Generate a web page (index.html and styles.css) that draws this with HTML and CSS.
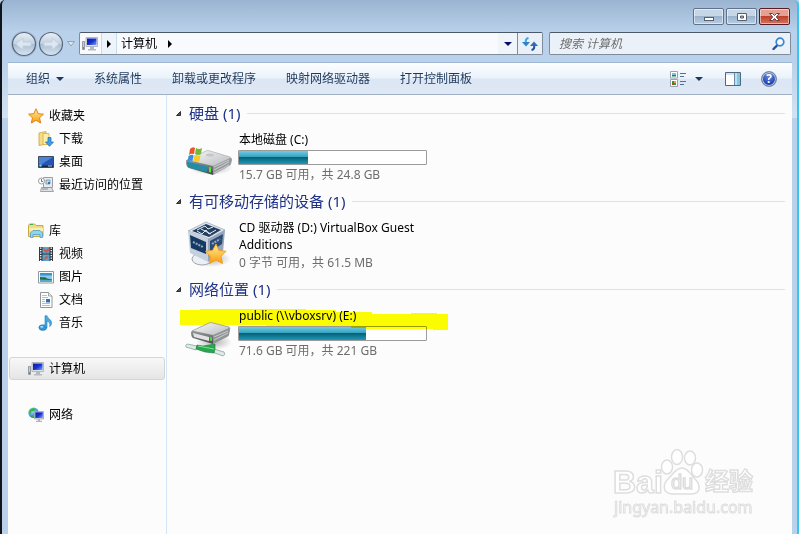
FILE: index.html
```html
<!DOCTYPE html>
<html lang="zh-CN">

<head>
    <meta charset="UTF-8">
    <meta name="viewport" content="width=device-width, initial-scale=1.0">
    <title>计算机</title>
    <link rel="stylesheet" href="styles.css">
</head>

<body>
    <!-- 公用图标 -->
    <svg class="defs" width="0" height="0" aria-hidden="true">
        <defs>
            <linearGradient id="screen" x1="0" y1="0" x2="1" y2="1">
                <stop offset="0" stop-color="#0a18b8"/>
                <stop offset=".5" stop-color="#1830d0"/>
                <stop offset="1" stop-color="#7da2f5"/>
            </linearGradient>
            <linearGradient id="gold" x1="0" y1="0" x2="0" y2="1">
                <stop offset="0" stop-color="#fff09a"/>
                <stop offset="1" stop-color="#f79a0c"/>
            </linearGradient>
            <linearGradient id="metal" x1="0" y1="0" x2="1" y2="1">
                <stop offset="0" stop-color="#fafafa"/>
                <stop offset="1" stop-color="#b4b6b8"/>
            </linearGradient>
            <linearGradient id="dark" x1="0" y1="0" x2="0" y2="1">
                <stop offset="0" stop-color="#9a9da0"/>
                <stop offset="1" stop-color="#46494c"/>
            </linearGradient>
            <linearGradient id="disc" x1="0" y1="0" x2="0" y2="1">
                <stop offset="0" stop-color="#e9f0f7"/>
                <stop offset=".48" stop-color="#c3d1e0"/>
                <stop offset=".5" stop-color="#a9bdd2"/>
                <stop offset="1" stop-color="#d8e6f3"/>
            </linearGradient>
            <radialGradient id="globe" cx=".35" cy=".3" r=".8">
                <stop offset="0" stop-color="#9fe8ff"/>
                <stop offset="1" stop-color="#1363b8"/>
            </radialGradient>
            <radialGradient id="shade">
                <stop offset="0" stop-color="#000" stop-opacity=".3"/>
                <stop offset="1" stop-color="#000" stop-opacity="0"/>
            </radialGradient>
            <symbol id="computer" viewBox="0 0 16 16">
                <path d="M.5 5.5h2v8h-2z" fill="#c9cdd0" stroke="#858b90" stroke-width=".8"/>
                <path d="M1 11h1v2H1z" fill="#34b64a"/>
                <path d="M4 1.5h11.5v9H4z" fill="#dfe3e6" stroke="#a5abb0" stroke-width=".8"/>
                <path d="M5 2.5h9.5V9H5z" fill="url(#screen)"/>
                <path d="M8 11h4v2h2v1.5H6V13h2z" fill="#b5babe"/>
            </symbol>
            <symbol id="drop" viewBox="0 0 8 4">
                <path d="M0 0h8L4 4z" fill="currentColor"/>
            </symbol>
            <symbol id="right" viewBox="0 0 4 8">
                <path d="M0 0v8l4-4z"/>
            </symbol>
            <symbol id="open" viewBox="0 0 7 7">
                <path d="M5.500 1.500v4h-4z" fill="#555" stroke="#222" stroke-width=".9"/>
            </symbol>
        </defs>
    </svg>

    <div class="window">
        <header>
            <div class="titlebar">
                <button type="button" class="win-btn" aria-label="最小化">
                    <svg width="12" height="10"><rect x="1.500" y="5.500" width="9" height="3" fill="#fff" stroke="#58606c"/></svg>
                </button>
                <button type="button" class="win-btn" aria-label="最大化">
                    <svg width="12" height="10"><path d="M1.500 1.500h9v7h-9zM4.500 4h3v2h-3z" fill="#fff" fill-rule="evenodd" stroke="#58606c"/></svg>
                </button>
                <button type="button" class="win-btn close" aria-label="关闭">
                    <svg width="13" height="10"><path d="M1.500 1.500h3l2 2 2-2h3L8.300 5l3.200 3.500h-3l-2-2-2 2h-3L4.700 5z" fill="#fff" stroke="#654046"/></svg>
                </button>
            </div>

            <div class="navbar">
                <div class="history">
                    <button type="button" aria-label="后退">
                        <svg width="26" height="26"><circle cx="13" cy="13" r="11.500" fill="url(#disc)" stroke="#59687a" stroke-width="1.200"/><path d="M5 13l7-6v4h8v4h-8v4z" fill="#dce7f2" stroke="#c3d0de"/></svg>
                    </button>
                    <button type="button" aria-label="前进">
                        <svg width="26" height="26"><circle cx="13" cy="13" r="11.500" fill="url(#disc)" stroke="#59687a" stroke-width="1.200"/><path d="M21 13l-7-6v4H6v4h8v4z" fill="#dce7f2" stroke="#c3d0de"/></svg>
                    </button>
                    <button type="button" class="recent" aria-label="最近位置">
                        <svg width="8" height="6"><path d="M.5.500h7L4 5z" fill="#dbe6f2" stroke="#8fa3b9"/></svg>
                    </button>
                </div>
                <div class="address">
                    <svg class="pc" width="16" height="16"><use href="#computer"/></svg>
                    <span class="crumb-arrow"><svg width="4" height="8"><use href="#right"/></svg></span>
                    <a class="crumb" href="#">计算机</a>
                    <svg width="4" height="8"><use href="#right"/></svg>
                    <button type="button" class="addr-drop" aria-label="以前的位置"><svg width="8" height="4"><use href="#drop"/></svg></button>
                    <button type="button" class="refresh" aria-label="刷新">
                        <svg width="16" height="14"><path d="M6.500 1C3.500 1.500 3.500 4 4 6" fill="none" stroke="#45a2dc" stroke-width="2"/><path d="M0 5h8L4 9.500z" fill="#2f7fca"/><path d="M9.500 13c3-.5 3-3 2.500-5" fill="none" stroke="#214f9c" stroke-width="2"/><path d="M8 9h8l-4-4.500z" fill="#2f6bb8"/></svg>
                    </button>
                </div>
                <div class="search">
                    <input type="text" aria-label="搜索" placeholder="搜索 计算机">
                    <svg width="13" height="13"><path d="M6 7.500L1.500 12" stroke="#27509c" stroke-width="2.400" stroke-linecap="round"/><circle cx="8" cy="5" r="3.800" fill="#f3f9fe" stroke="#3a86cc" stroke-width="1.700"/></svg>
                </div>
            </div>
        </header>

        <nav class="toolbar">
            <button type="button">组织<svg width="8" height="4"><use href="#drop"/></svg></button>
            <button type="button">系统属性</button>
            <button type="button">卸载或更改程序</button>
            <button type="button">映射网络驱动器</button>
            <button type="button">打开控制面板</button>
            <div class="tools">
                <button type="button" aria-label="更改视图">
                    <svg width="17" height="16"><path d="M.5.500h7v6.500h-7zM.5 8.500h7v7h-7z" fill="#fff" stroke="#9aa3ad"/><path d="M2 2h4v2H2z" fill="#72c4e8"/><path d="M2 4h4v1.500H2z" fill="#2b7b50"/><path d="M2 10h2v2H2zM4 12h2v2H4z" fill="#2e9b3c"/><path d="M4 10h2v2H4z" fill="#e3a520"/><path d="M2 12h2v2H2z" fill="#c73530"/><path d="M10 2.500h6M10 5.500h4M10 10.500h6M10 13.500h4" stroke="#54708f"/></svg>
                    <svg width="8" height="4"><use href="#drop"/></svg>
                </button>
                <button type="button" aria-label="显示预览窗格">
                    <svg width="16" height="14"><path d="M.5.500h15v13H.5z" fill="#fff" stroke="#4f6781"/><path d="M1 1h9v2H1z" fill="#d6e1ec"/><path d="M10 1h5v12h-5z" fill="#81c9e2"/><path d="M10 1h2v12h-2z" fill="#b4e3f2"/><path d="M9.500 1v12" stroke="#6f8ba6"/></svg>
                </button>
                <button type="button" class="help" aria-label="帮助">?</button>
            </div>
        </nav>

        <div class="content">
            <aside class="sidebar">
                <ul>
                    <li><a href="#"><svg width="16" height="16"><path d="M8 .8l2.200 4.900 5.200.5-3.900 3.600 1.200 5.200L8 12.300 3.300 15l1.200-5.200L.6 6.200l5.200-.5z" fill="url(#gold)" stroke="#e08318"/></svg>收藏夹</a></li>
                    <li class="sub"><a href="#"><svg width="16" height="16"><path d="M1 2l7-1.500V13L1 14.500z" fill="#f6dd83" stroke="#c9a53d" stroke-width=".8"/><path d="M5 2.500h6v11H5z" fill="#fbedaa" stroke="#d5b04b" stroke-width=".8"/><path d="M10 6.500h3V11h2.500l-4 4.300-4-4.300H10z" fill="#3da0e8" stroke="#1c66b0" stroke-width=".7"/></svg>下载</a></li>
                    <li class="sub"><a href="#"><svg width="16" height="16"><path d="M.5 2.500h15v11H.5z" fill="#2555b0" stroke="#3b4a60"/><path d="M1 3h14L4 10H1z" fill="#4d83d6"/><path d="M1 11.500h14V13H1z" fill="#1c2740"/><circle cx="2.500" cy="11.500" r="1.300" fill="#59d4ee"/><path d="M10 12h4" stroke="#a3bedd"/></svg>桌面</a></li>
                    <li class="sub"><a href="#"><svg width="16" height="16"><path d="M5.500.500h9v10h-9z" fill="#e8ebee" stroke="#999fa5"/><path d="M8 3h4v4H8z" fill="#a8e0f5" stroke="#7d8890" stroke-width=".7"/><path d="M10 5h2v2h-2z" fill="#2876b9"/><path d="M3.500 10.500h10l2 4h-13z" fill="#dde1e4" stroke="#8b9197" stroke-width=".8"/><path d="M4 12h6" stroke="#888e94"/><circle cx="3.500" cy="4" r="3" fill="#fff" stroke="#9b9fa3"/><path d="M3.500 2v2.500H5" fill="none" stroke="#555" stroke-width=".8"/></svg>最近访问的位置</a></li>
                </ul>
                <ul>
                    <li><a href="#"><svg width="16" height="16"><path d="M.5 2.500l1-1.500h5l1.500 1.500h7v11H.5z" fill="#f3db80" stroke="#cba642"/><path d="M2 1.500h3" stroke="#45b049"/><path d="M1 5h14v3H1z" fill="#fbefad"/><path d="M2.500 14.500V10L5 7.500h7l2.500 2.500v4.500H12v-3H5v3z" fill="#91d5f2" stroke="#4c9dc9" stroke-width=".8"/></svg>库</a></li>
                    <li class="sub"><a href="#"><svg width="16" height="16"><path d="M1 1h14v14H1z" fill="#34393e"/><path d="M4.500 1h7v6.500h-7z" fill="#54a5d8"/><path d="M4.500 8.500h7V15h-7z" fill="#54a5d8"/><path d="M5 1l3 3 3-2v3L8 7 6 5zM5 15l2-4 2-1 2 1-3 2z" fill="#c1614b"/><path d="M2.700 1.500v14M13.300 1.500v14" stroke="#fff" stroke-width="1.400" stroke-dasharray="1.300 1.200"/></svg>视频</a></li>
                    <li class="sub"><a href="#"><svg width="16" height="16"><path d="M.5 2.500h15v11.500H.5z" fill="#fff" stroke="#9299a0"/><path d="M2 4h12v8.500H2z" fill="#84cdec"/><path d="M2 4h12v2.500H2z" fill="#3d93cc"/><path d="M2 8c3 1 5-1 7 1.500l5 1v2H2z" fill="#24674b"/><path d="M2 10.500l12 .5v1.500H2z" fill="#56aac9"/></svg>图片</a></li>
                    <li class="sub"><a href="#"><svg width="16" height="16"><path d="M2.500.500h8l3.500 3.500v11.500H2.500z" fill="#fff" stroke="#90979e"/><path d="M10.500.500V4H14" fill="#e3e8ed" stroke="#90979e" stroke-width=".8"/><path d="M4 3.500h5M4 5.500h6M4 7.500h3M4 9.500h3M4 11.500h8M4 13.500h8" stroke="#9fb0bf" stroke-width=".8"/><path d="M8 7h4v3.500H8z" fill="#2e70b9"/></svg>文档</a></li>
                    <li class="sub"><a href="#"><svg width="16" height="16"><ellipse cx="4.800" cy="12.600" rx="3.900" ry="2.800" fill="#2e99dd" stroke="#1768ae" stroke-width=".6"/><path d="M7 12.500V.8h2c.5 3 5 3.500 4.500 7.700-.2 1.500-1 2.500-1.800 3 .8-3-.4-4.800-2.700-5.500v6.500z" fill="#46aae7" stroke="#1f78bd" stroke-width=".6"/><ellipse cx="3.800" cy="11.700" rx="1.700" ry="1" fill="#9bd9f8"/></svg>音乐</a></li>
                </ul>
                <ul>
                    <li class="selected"><a href="#"><svg width="16" height="16"><use href="#computer"/></svg>计算机</a></li>
                </ul>
                <ul>
                    <li><a href="#"><svg width="16" height="16"><circle cx="5.500" cy="5.800" r="5.200" fill="url(#globe)"/><path d="M2 2.500L5 1l3 1-1.500 2-3 .5-1 3L.8 6zM3 8l3 .5-1 2.300z" fill="#38b84a"/><path d="M6.500 4.500h9v7.500h-9z" fill="#dfe3e6" stroke="#9ea5ac" stroke-width=".8"/><path d="M7.300 5.300h7.500V11H7.300z" fill="url(#screen)"/><path d="M10 12h2v1.800h2V15H8v-1.200h2z" fill="#b0b6bb"/></svg>网络</a></li>
                </ul>
            </aside>

            <main>
                <section>
                    <h2><svg width="7" height="7"><use href="#open"/></svg>硬盘 (1)</h2>
                    <div class="drive">
                        <svg class="drive-icon" width="48" height="36" viewBox="0 0 48 36">
                            <ellipse cx="26" cy="27" rx="22" ry="7" fill="url(#shade)"/>
                            <path d="M2 19L21 10q2-1 4 0l20 6q2 1 1 3L27 27z" fill="url(#metal)" stroke="#a0a2a4" stroke-width=".6"/>
                            <path d="M1 20q0-2 2-1l25 6v9L4 27q-3-1-3-7z" fill="url(#dark)"/>
                            <path d="M2 20.500l20 5V31L5 27q-3-1-3-6.500z" fill="#248ca3"/>
                            <path d="M28 25l17-8q2 0 2 2l-1 4q0 1-2 2l-16 9z" fill="#989b9e"/>
                            <path d="M29 26l15-7M29 29l15-8M29 32l15-8" stroke="#d9dbdc" stroke-width=".8"/>
                            <path d="M24 26l2 .5v5l-2-.5z" fill="#46ef2c"/>
                            <ellipse cx="25" cy="14" rx="4" ry="1.500" fill="#c5c7c9"/>
                            <path d="M5 8q3-3 5-1L9 13q-3-1-5 1z" fill="#e8572a"/>
                            <path d="M11 7q3 2 6 0l-1 6q-3 2-6 0z" fill="#75b73b"/>
                            <path d="M3.500 15q3-2 5-1l-1 6q-3-1-5 1z" fill="#3a8fdc"/>
                            <path d="M9.500 14q3 2 6 0l-1 6q-3 2-6 0z" fill="#f8cb2d"/>
                        </svg>
                        <div class="info">
                            <p class="name">本地磁盘 (C:)</p>
                            <div class="bar"><div class="fill" style="width: 37%"></div></div>
                            <p class="size">15.7 GB 可用，共 24.8 GB</p>
                        </div>
                    </div>
                </section>

                <section>
                    <h2><svg width="7" height="7"><use href="#open"/></svg>有可移动存储的设备 (1)</h2>
                    <div class="drive">
                        <svg class="drive-icon cube" width="48" height="50" viewBox="0 0 48 48">
                            <ellipse cx="26" cy="39" rx="20" ry="8" fill="url(#shade)"/>
                            <ellipse cx="17" cy="39" rx="10" ry="6" fill="#edf0f3" stroke="#9fa6ae"/>
                            <path d="M21 2l19 8-16 9L3 11z" fill="#dce4ee" stroke="#8995a5" stroke-width=".6"/>
                            <path d="M3 11l20 8v23L5 33z" fill="#c5d0de"/>
                            <path d="M23 19l17-9-2 22-15 10z" fill="#96a5bb"/>
                            <path d="M21 4l15 6-12 7L7 11z" fill="#24405f"/>
                            <path d="M5 15l16 7v12L6 28z" fill="#173a62"/>
                            <path d="M25 21l13-7-1 10-12 8z" fill="#2b4a74"/>
                            <path d="M12 10l8-4 3 3 5-2M12 11l5 3 4-4 3 4 7-4M16 9l10 5" fill="none" stroke="#e5eef7"/>
                            <path d="M8 22l10 5M27 24l8-5" stroke="#93abca" stroke-width="2" stroke-dasharray="2 1"/>
                            <path d="M31 24l3 6.500 7 .8-5 5 1.500 7.200-6.500-3.500-6.500 3.500 1-7.200-5-5 7-.8z" fill="url(#gold)" stroke="#f1a020"/>
                        </svg>
                        <div class="info">
                            <p class="name">CD 驱动器 (D:) VirtualBox Guest Additions</p>
                            <p class="size">0 字节 可用，共 61.5 MB</p>
                        </div>
                    </div>
                </section>

                <section>
                    <h2><svg width="7" height="7"><use href="#open"/></svg>网络位置 (1)</h2>
                    <div class="drive">
                        <svg class="drive-icon" width="48" height="42" viewBox="0 0 48 42">
                            <ellipse cx="29" cy="25" rx="18" ry="8" fill="url(#shade)"/>
                            <path d="M7 14L24 6q2-1 4 0l16 4q2 1 0 3L28 20z" fill="url(#metal)" stroke="#8d8f91" stroke-width=".7"/>
                            <path d="M6 15q1-2 3-1l19 4v9L8 21q-2-1-2-6z" fill="url(#dark)"/>
                            <path d="M8 16l16 4v4L9 20z" fill="#e2e3e4"/>
                            <path d="M28 18l16-7q1 0 1 2l-1 5q0 1-2 2l-14 7z" fill="#919497"/>
                            <path d="M29 20l14-6M29 23l14-7" stroke="#d8dadb" stroke-width=".8"/>
                            <path d="M25 20l2 .5v3.500l-2-.5z" fill="#43e62b"/>
                            <path d="M2 27l10 2-1 4-10-3q-1-2 1-3zM29 32l10 3q2 3-1 4l-11-4z" fill="#dcebe8" stroke="#9fb5af"/>
                            <path d="M12 28l6 1 12-2v5l-1 4-9-1-9-3z" fill="#28a84e" stroke="#16793a" stroke-width=".6"/>
                            <path d="M13 29l16 3" stroke="#7fe09a"/>
                        </svg>
                        <div class="info">
                            <p class="name">public (\\vboxsrv) (E:)</p>
                            <div class="bar"><div class="fill" style="width: 68%"></div></div>
                            <p class="size">71.6 GB 可用，共 221 GB</p>
                        </div>
                        <svg class="marker" width="268" height="22"><path d="M0 1h20V0h106v1h30v2h36v2h39v-1h26v1h11v16h-15v-1h-67v-1h-15V17H86v-1H0z" fill="#ff0"/></svg>
                    </div>
                </section>

                <svg class="watermark" width="150" height="74" viewBox="0 0 150 74">
                    <g fill="#fff" stroke="#dedede" stroke-width="1.500">
                        <text class="logo" x="0" y="46">Bai</text>
                        <ellipse cx="54" cy="20" rx="5.500" ry="7"/>
                        <ellipse cx="64" cy="10" rx="5.500" ry="7.500"/>
                        <ellipse cx="77" cy="11" rx="5.500" ry="7"/>
                        <ellipse cx="84" cy="23" rx="5.500" ry="7"/>
                        <path d="M69 21c6 0 9 7 13 11 5 5 7 14-3 15H59c-10-1-9-10-4-15 5-4 7-11 14-11z"/>
                        <text class="du" x="58" y="42">du</text>
                        <text class="exp" x="92" y="43">经验</text>
                    </g>
                    <text class="site" x="1" y="66">jingyan.baidu.com</text>
                </svg>
            </main>
        </div>
    </div>
</body>

</html>
```
FILE: styles.css
```css
* {
    box-sizing: border-box;
}

body {
    margin: 0;
    font-family: "Noto Sans", "Noto Sans CJK SC", sans-serif;
    font-size: 12px;
    line-height: 17px;
    color: #000;
    background: #b9d1ea;
}

button {
    margin: 0;
    padding: 0;
    border: 0;
    background: none;
    font: inherit;
    color: inherit;
}

a {
    color: inherit;
    text-decoration: none;
}

svg {
    display: block;
    flex: none;
}

h2,
p,
ul {
    margin: 0;
    padding: 0;
    font-weight: normal;
}

.defs {
    position: absolute;
}

.window {
    display: flex;
    flex-direction: column;
    min-height: 100vh;
    padding: 0 5px 0 6px;
    border-left: 2px solid #10151c;
    border-right: 2px solid #35c5f0;
    border-radius: 5px 5px 0 0;
    background: linear-gradient(#9ab4d1, #b9d1ea 32px, #b9d1ea 60px, #d3e2f2 118px, #b9d1ea 118px);
}

/* 标题栏 */
.titlebar {
    display: flex;
    justify-content: flex-end;
    gap: 2px;
    height: 32px;
    padding: 8px 2px 0 0;
}

.win-btn {
    display: flex;
    align-items: center;
    justify-content: center;
    width: 31px;
    height: 17px;
    border: 1px solid #61738a;
    border-radius: 2px;
    background: linear-gradient(#c6d6e7 45%, #9bb2cc 50%, #b8cee4);
    box-shadow: inset 0 0 0 1px rgba(255, 255, 255, 0.5);
}

.close {
    border-color: #5c1a23;
    background: linear-gradient(#e4a193 45%, #bf412b 50%, #d4735b);
}

/* 地址栏 */
.navbar {
    display: flex;
    height: 30px;
    padding-right: 1px;
}

.history {
    display: flex;
    align-items: center;
    gap: 1px;
    width: 70px;
    height: 24px;
    padding-left: 3px;
}

.history button:first-child {
    border-radius: 13px;
    background: #a5bad2;
}

.recent {
    margin-left: 2px;
}

.address,
.search {
    display: flex;
    align-items: center;
    height: 23px;
    border: 1px solid #7f8c9c;
    border-top-color: #4d5866;
    border-radius: 2px;
    background: #f8fafd;
}

.address {
    flex: 1;
    margin: 0 6px 0 1px;
}

.pc {
    margin: 0 3px 0 2px;
}

.crumb-arrow {
    display: flex;
    align-items: center;
    justify-content: center;
    height: 21px;
    width: 16px;
    border-left: 1px solid #c6dced;
    border-right: 1px solid #c6dced;
    background: #edf5fb;
}

.crumb {
    margin: 0 11px 0 4px;
}

.addr-drop {
    display: flex;
    align-items: center;
    justify-content: center;
    width: 19px;
    height: 21px;
    margin-left: auto;
    background: #f0f5fa;
    color: #0a0a6a;
}

.refresh {
    display: flex;
    align-items: center;
    justify-content: center;
    width: 25px;
    height: 21px;
    border-left: 1px solid #7f8c9c;
    background: #e9f0f8;
}

.search {
    width: 242px;
    padding: 0 5px 0 9px;
    background: #eaf1f9;
}

.search input {
    flex: 1;
    min-width: 0;
    padding: 0;
    border: 0;
    outline: 0;
    background: none;
    font: inherit;
}

.search input::placeholder {
    color: #6d6d6d;
    font-style: italic;
    opacity: 1;
}

/* 工具栏 */
.toolbar {
    display: flex;
    align-items: center;
    gap: 30px;
    height: 33px;
    padding: 0 15px 0 18px;
    border-top: 1px solid #9db6d2;
    border-bottom: 1px solid #a0afc3;
    background: linear-gradient(#fdfeff, #eaf2fb 48%, #dce6f4 52%, #dfe8f5);
    color: #1e395b;
}

.toolbar button {
    display: flex;
    align-items: center;
    gap: 6px;
    white-space: nowrap;
}

.tools {
    display: flex;
    align-items: center;
    gap: 20px;
    margin-left: auto;
}

.tools button {
    gap: 8px;
}

.tools button:first-child {
    margin-right: 2px;
}

.tools .help {
    justify-content: center;
    width: 16px;
    height: 16px;
    border: 1px solid #7b8699;
    border-radius: 50%;
    background: radial-gradient(circle at 50% 25%, #6e92e0, #1b3fae 70%);
    box-shadow: inset 0 0 0 1px #b9c7e3;
    color: #fff;
    font-size: 12px;
    font-weight: bold;
}

/* 导航窗格 */
.content {
    display: flex;
    flex: 1;
    background: #fcfcfc;
}

.sidebar {
    display: flex;
    flex-direction: column;
    flex: none;
    gap: 23px;
    width: 159px;
    padding: 9px 1px 0;
    border-right: 1px solid #d6e5f5;
}

.sidebar ul {
    list-style: none;
}

.sidebar a {
    display: flex;
    align-items: center;
    gap: 5px;
    height: 23px;
    padding-left: 19px;
}

.sidebar .sub a {
    padding-left: 29px;
}

.sidebar .selected a {
    padding-left: 18px;
    border: 1px solid #d5d5d5;
    border-radius: 3px;
    background: linear-gradient(#f8f8f8, #e5e5e5);
}

/* 驱动器列表 */
main {
    position: relative;
    flex: 1;
    min-width: 0;
    padding: 6px 7px 0 8px;
}

section {
    min-height: 88px;
}

h2 {
    display: flex;
    align-items: center;
    gap: 7px;
    height: 24px;
    font-size: 15px;
    color: #1e3287;
}

h2::after {
    content: "";
    flex: 1;
    height: 1px;
    background: #e0e2e6;
}

.drive {
    position: relative;
    display: flex;
    gap: 5px;
    margin: 6px 0 0 10px;
}

.drive-icon {
    position: relative;
    z-index: 2;
    margin-top: 10px;
}

.cube {
    margin-top: 0;
}

.info {
    width: 190px;
}

.info p {
    padding-left: 1px;
}

.bar {
    width: 189px;
    height: 15px;
    margin: 2px 0 1px;
    border: 1px solid #9b9b9b;
    border-radius: 1px;
    background: #fff;
}

.fill {
    height: 100%;
    background: linear-gradient(#72cbe0, #35a3c0 45%, #086078 50%, #1c9ab8);
}

.size {
    color: #6d6d6d;
}

.name + .size {
    margin-top: 1px;
}

/* 荧光笔标记 */
.marker {
    position: absolute;
    top: 2px;
    left: -5px;
    mix-blend-mode: multiply;
}

/* 水印 */
.watermark {
    position: absolute;
    right: 29px;
    bottom: 13px;
    font-family: "Liberation Sans", "Noto Sans CJK SC", sans-serif;
}

.watermark .logo {
    font-size: 32px;
    font-weight: bold;
}

.watermark .du {
    font-size: 20px;
}

.watermark .exp {
    font-size: 24px;
    font-weight: bold;
}

.watermark .site {
    font-family: "Noto Sans", sans-serif;
    font-size: 16px;
    fill: #fff;
    stroke: #dedede;
}
```
